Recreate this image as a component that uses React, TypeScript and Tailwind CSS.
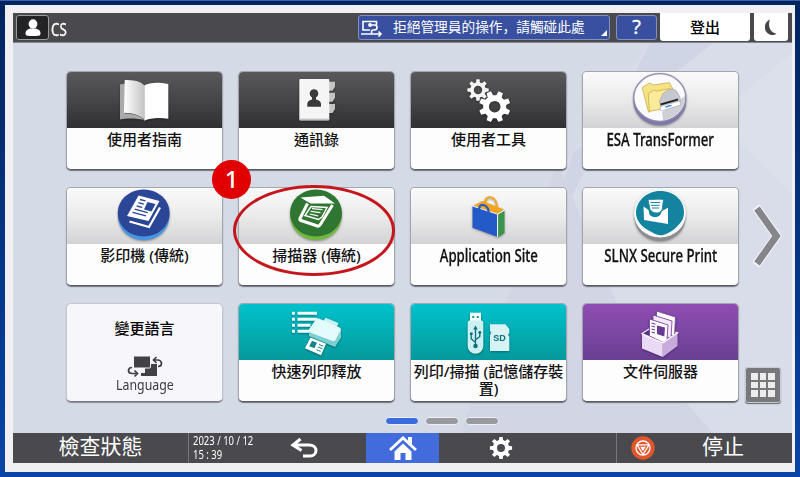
import React from 'react';

type Tone = 'dark' | 'light' | 'teal' | 'purple';

interface AppTile {
  id: string;
  tone: Tone;
  icon: React.ReactNode;
  label: React.ReactNode;
}

const toneClass: Record<Tone, string> = {
  dark: 'bg-linear-to-b from-[#59595b] via-[#464648] to-[#303032]',
  light: 'bg-linear-to-b from-[#fafafa] via-[#ebebec] to-[#d3d3d5]',
  teal: 'bg-linear-to-b from-[#00c2cc] to-[#06999c]',
  purple: 'bg-linear-to-b from-[#8f4db3] to-[#693f93]',
};

// closed outline of a cog wheel with eight teeth and a round hole
const gearPath = (cx: number, cy: number, outer: number, inner: number, hole: number, turn = 0) => {
  const points: string[] = [];
  for (let i = 0; i < 8; i++) {
    const base = ((i * 45 + turn - 90) * Math.PI) / 180;
    [[-0.25, inner], [-0.15, outer], [0.15, outer], [0.25, inner]].forEach(([a, r]) => {
      points.push(`${(cx + r * Math.cos(base + a)).toFixed(2)} ${(cy + r * Math.sin(base + a)).toFixed(2)}`);
    });
  }
  return `M${points.join('L')}ZM${cx - hole} ${cy}a${hole} ${hole} 0 1 0 ${hole * 2} 0a${hole} ${hole} 0 1 0 ${-hole * 2} 0Z`;
};

const TileIcon: React.FC<{ children: React.ReactNode }> = ({ children }) => (
  <svg className="-ml-px block h-[56px] w-[156px] drop-shadow-[0_1px_1px_rgba(0,0,0,0.35)]" viewBox="0 0 156 56" fill="none">
    {children}
  </svg>
);

const BookIcon = () => (
  <TileIcon>
    <defs>
      <linearGradient id="page" x1="0" x2="1">
        <stop offset="0" stopColor="#fff" />
        <stop offset="1" stopColor="#c4c4c4" />
      </linearGradient>
    </defs>
    <path d="M54 12.500l5-1v30c8 0 15 2 19.300 6.500C70 46 61 46 54 47.500Z" fill="#a9a9a9" />
    <path d="M58.700 8C67 8 75 9 78.300 13.500V47.500C74 43 66 41 58 40.700Z" fill="url(#page)" />
    <path d="M78.300 13.500C84 10 93 10 102.300 12V46.700C94 45.500 84 45.500 78.300 48.700Z" fill="#fff" />
  </TileIcon>
);

const AddressBookIcon = () => (
  <TileIcon>
    <path d="M91 9.700h6v5l-2.500 4H91ZM91 20.700h6v5l-2.500 4H91ZM91 32h6v5l-2.500 4H91Z" fill="#c3c3c3" />
    <rect x="61.300" y="7" width="30" height="41.500" rx="1" fill="#f5f5f5" />
    <path d="M61.300 47.300h30" stroke="#bcbcbc" strokeWidth="1.300" />
    <circle cx="76" cy="21.500" r="4.300" fill="#3a3a3c" />
    <path d="M69.300 34.700v-2.500c0-3 2.500-4.500 4.700-4.500v-3h4v3c2.500 0 5 1.500 5 4.500v2.500Z" fill="#3a3a3c" />
  </TileIcon>
);

const GearsIcon = () => (
  <TileIcon>
    <path d={gearPath(68, 18, 10.8, 7.8, 4.2)} fill="#f4f4f4" fillRule="evenodd" />
    <path d={gearPath(84.7, 34.7, 15.8, 11.6, 5.8, 22.5)} fill="#fff" fillRule="evenodd" />
  </TileIcon>
);

const TransformerIcon = () => (
  <TileIcon>
    <ellipse cx="77.800" cy="29" rx="26.500" ry="24.300" fill="#7f79a8" />
    <ellipse cx="77.800" cy="25.500" rx="26" ry="23.800" fill="#fbfbfd" stroke="#8d88b0" strokeWidth="1.300" />
    <path d="M80 40L103 24c1 12-9 22-22 24.500Z" fill="#cfcfd6" />
    <path d="M60.200 15.500l7.500-4.500 3.500 2 16.300-2.300 3 6-13 18-11 5.500Z" fill="#f5e384" stroke="#c9ad4c" strokeWidth=".8" />
    <path d="M66.200 21.500l5.500-3.500 3 1 13.800-2.500 3.500 4L78 37.500l-10.500 1.700Z" fill="#f9eb97" stroke="#c9ad4c" strokeWidth=".8" />
    <path d="M77.500 29l3.500-7.500q5-4.500 10-4.500l3 1.500 4 6.500v5.500l-19 6Z" fill="#c6c8cf" stroke="#9293a0" strokeWidth=".5" />
    <path d="M78.500 31.500l17.500-5v2l-17.500 5Z" fill="#222" />
    <path d="M78 34.500l20-5.500.5 4L79 39Z" fill="#fff" stroke="#9898a4" strokeWidth=".5" />
    <path d="M83.500 35l6-1.700" stroke="#3a86cf" strokeWidth="1.300" />
  </TileIcon>
);

const CopierIcon = () => (
  <TileIcon>
    <ellipse cx="77.700" cy="28.500" rx="25.700" ry="23.700" fill="#4694e2" />
    <ellipse cx="77.700" cy="25" rx="26" ry="23.600" fill="#2b4597" />
    <path d="M72.500 7.500L93.500 13 82.500 33 61 28Z" fill="#fff" />
    <path d="M63.500 33.500l19.500 5.500 11-19.500" stroke="#fff" strokeWidth="2.300" />
    <path d="M81.500 14l8 2-4 7.500-7.500-2Z" fill="#2b4597" />
    <path d="M74 11.500l5.500 1.400M72.400 14.700l5.400 1.400M70.700 18l5.400 1.400M68.700 21.200l13 3.500M66.500 24.300l13.500 3.600" stroke="#2b4597" strokeWidth="1.300" />
  </TileIcon>
);

const ScannerIcon = () => (
  <TileIcon>
    <ellipse cx="78" cy="28.500" rx="25.700" ry="23.700" fill="#72b63f" />
    <ellipse cx="78" cy="25" rx="26" ry="23.600" fill="#2e7631" />
    <path d="M62.500 9.500L86 7.800 97 15.500 72.500 15.500Z" fill="#fff" />
    <path d="M69.500 15.500L62 30.500q-.5 1.500 1 2l16.500 5.500q1.500.5 2.500-1L94.500 17" stroke="#fff" strokeWidth="3" strokeLinejoin="round" />
    <path d="M73 18.500l16 1-5 9.500-3.500 2.500-13.500-4Z" stroke="#fff" strokeWidth="1.500" />
    <path d="M74 20.700l10.500 1M72.800 23.300l9.700 1.300M71.600 26l8.500 1.800" stroke="#fff" strokeWidth="1.200" />
  </TileIcon>
);

const BagIcon = () => (
  <TileIcon>
    <path d="M63.500 17.500l9-4.500 21.500 8.500-7.300 4.200Z" fill="#f3a41d" />
    <path d="M88.200 26.500l6.300-4V45l-6.300 4.200Z" fill="#38954b" />
    <path d="M62.500 18l24.700 8v22.700L62.500 39.700Z" fill="#2459c8" />
    <path d="M62.500 18l25 8.200V49M87.500 26.200l7-4" stroke="#fff" strokeWidth=".9" />
    <path d="M75.500 16.500c-1-6 2-7.700 5-7.200 4.500.7 6.500 5 6.200 9.700" stroke="#f3a41d" strokeWidth="2" />
    <path d="M69 24.500c-.7-6 1.700-8.200 4.500-7.500 3.700.8 5.500 5 5.200 10.500" stroke="#2459c8" strokeWidth="2.200" />
  </TileIcon>
);

const SecurePrintIcon = () => (
  <TileIcon>
    <ellipse cx="78" cy="29.500" rx="25.500" ry="23.500" fill="#8b8b8f" />
    <ellipse cx="78" cy="25.500" rx="26" ry="24" fill="#f7f8f9" />
    <path d="M78 3C93 3 102 13 102 24c0 4-1 7.500-3 10-5 6.500-11 11-18 13-4 1-8-1-11.500-3C59 39 54 32 54 25 54 13 65 3 78 3Z" fill="#13839f" />
    <path d="M61.500 18.500l5 3.500 1 4.500c3 3.500 8 3.500 11 0l1.500-3.500 6-3.200V36l-24-4Z" fill="#fff" />
    <path d="M66 11.500c5 .5 9-1 15.500 0L80 22c-2 4-9 4-12-.5Z" fill="#fff" stroke="#13839f" strokeWidth=".8" />
    <path d="M68.500 14.500h9.500M69 17.300h8.500M70 20h7" stroke="#13839f" strokeWidth="1" />
  </TileIcon>
);

const QuickPrintIcon = () => (
  <TileIcon>
    <path d="M54 9.300h2.900M54 15.300h2.900M54 21.300h2.900M54 27.300h2.900M59.500 9.300h19.500M59.500 15.300h19.500M59.500 21.300h13M59.500 27.300h12" stroke="#effdfd" strokeWidth="3" />
    <path d="M71 25.500L78 15l25 10.500v8l-6 9.500-26-11Z" fill="#7bcfd0" />
    <path d="M87.500 13.700l13 5.300-4 9-14-6Z" fill="#c9f3f3" />
    <path d="M78.500 14.800q1.500-1 3 0l20 8.700q2 1 1 3l-5 9.500q-1 1.500-3 1L72 28.500q-2-1-1-3Z" fill="#e3fbfb" />
    <path d="M72.500 33.500l15.500 6.200-5 11.500-16-7Z" fill="#fff" />
    <path d="M74 36.700l5 2-2.700 5.500-5-2Z" fill="#14868a" />
    <path d="M81 40.500l4.300 1.700M80 43l4.300 1.700M78.500 45.700l4 1.700" stroke="#14868a" strokeWidth="1" />
  </TileIcon>
);

const StorageIcon = () => (
  <TileIcon>
    <path d="M60 8.700h11v9H60Z" fill="#f2fdfd" />
    <path d="M62.300 12h1.900v2h-1.900ZM66.800 12h1.900v2h-1.900Z" fill="#188e94" />
    <path d="M57.700 18.500q0-2 2-2h11.600q2 0 2 2V42a7.800 7.800 0 0 1-15.600 0Z" fill="#cdf0f0" />
    <path d="M65.500 42V24M65.500 38.500l-4.300-3.700V30M65.500 36l4.300-3.500v-4" stroke="#0a6d7d" strokeWidth="1.300" />
    <path d="M65.500 21.500l2.300 4h-4.600ZM60 28.500h2.600v2.600H60Z" fill="#0a6d7d" />
    <circle cx="69.800" cy="28.500" r="1.400" fill="#0a6d7d" />
    <circle cx="65.500" cy="42" r="2.200" fill="#0a6d7d" />
    <path d="M80 20.300h15.500l3.800 4.700v4l-.9 1v2l.9.500V47H80V31l.9-1v-2l-.9-1Z" fill="#d6f2f2" />
    <text x="89.600" y="37.200" textAnchor="middle" fill="#0a6d7d" className="font-['Liberation_Sans'] text-[9px] font-bold">
      SD
    </text>
  </TileIcon>
);

const DocumentServerIcon = () => (
  <TileIcon>
    <path d="M60 29.500l8-5 27.500 4-14.700 10Z" fill="#58307c" stroke="#f0e3fa" strokeWidth="1.200" />
    <path d="M74.500 7l19 6-1 19-18-4Z" fill="#fff" stroke="#7a44a0" strokeWidth=".9" />
    <path d="M71 11l19 6-1 17-18-4Z" fill="#f4e9fa" stroke="#7a44a0" strokeWidth=".9" />
    <path d="M67.500 15l18.500 6-1 15-4 2.500-13.500-6.500Z" fill="#fff" stroke="#7a44a0" strokeWidth=".9" />
    <path d="M75 21.500l8 2-.7 9-7.300-2.500Z" fill="#693a91" />
    <path d="M69.500 19l4 1.200M69.500 22l3.500 1M69.500 25l3.500 1M69.500 28l3.500 1" stroke="#693a91" strokeWidth="1.100" />
    <path d="M60 30.300l20.800 8.400v14.300L60 44.500Z" fill="#ead9f5" />
    <path d="M80.800 38.700l14.700-10V42L80.800 53Z" fill="#c9aade" />
    <path d="M60 30.300l20.800 8.400 14.700-10" stroke="#fff" strokeWidth="1.200" />
  </TileIcon>
);

// Latin labels use a narrow cut of the sans face
const Latin: React.FC<{ children: React.ReactNode }> = ({ children }) => (
  <span className="inline-block scale-x-[0.735] text-[18px] whitespace-nowrap [-webkit-text-stroke:0.3px_#111]">
    {children}
  </span>
);

const tiles: AppTile[] = [
  { id: 'guide', tone: 'dark', icon: <BookIcon />, label: '使用者指南' },
  { id: 'contacts', tone: 'dark', icon: <AddressBookIcon />, label: '通訊錄' },
  { id: 'tools', tone: 'dark', icon: <GearsIcon />, label: '使用者工具' },
  { id: 'esa', tone: 'light', icon: <TransformerIcon />, label: <Latin>ESA TransFormer</Latin> },
  { id: 'copier', tone: 'light', icon: <CopierIcon />, label: '影印機 (傳統)' },
  { id: 'scanner', tone: 'light', icon: <ScannerIcon />, label: '掃描器 (傳統)' },
  { id: 'site', tone: 'light', icon: <BagIcon />, label: <Latin>Application Site</Latin> },
  { id: 'slnx', tone: 'light', icon: <SecurePrintIcon />, label: <Latin>SLNX Secure Print</Latin> },
  { id: 'language', tone: 'light', icon: null, label: '變更語言' },
  { id: 'quick', tone: 'teal', icon: <QuickPrintIcon />, label: '快速列印釋放' },
  { id: 'storage', tone: 'teal', icon: <StorageIcon />, label: <>列印/掃描 (記憶儲存裝<br />置)</> },
  { id: 'server', tone: 'purple', icon: <DocumentServerIcon />, label: '文件伺服器' },
];

const tileFrame =
  'flex h-[99px] w-[157px] flex-col overflow-hidden rounded-[5px] border border-[#a3a6ae] border-b-[#5c5d62] bg-[#fdfdfe] shadow-[0_1px_1px_rgba(70,70,80,0.7)]';

const LanguageTile: React.FC<{ label: React.ReactNode }> = ({ label }) => (
  <div className="flex h-[99px] w-[157px] flex-col items-center rounded-[5px] border border-[#c3c6ce] border-b-[#77787d] bg-[#f7f7fb] pt-[15px] shadow-[0_1px_1px_rgba(70,70,80,0.5)]">
    <span className="text-[15px] leading-[18px] font-medium">{label}</span>
    <svg className="mt-[18px] h-[23px] w-9" viewBox="0 0 36 23" fill="none">
      <path d="M18 9h12v12H14v-3h4Z" fill="#414147" />
      <rect x="6.500" y="1" width="17" height="12" rx="1" fill="#414147" stroke="#f7f7fb" />
      <path d="M27 5h4q3.500.5 3.500 3.500T31 11.500M29.500 2L26.500 5l3 3M5 12.500q-3.500 0-3.500 3T5 18.500h5M7.500 15.500l3 3-3 3" stroke="#414147" strokeWidth="1.700" />
    </svg>
    <span className="-mt-[2px] scale-x-[0.85] text-[14.5px] leading-[16px] text-[#3a3a40]">Language</span>
  </div>
);

const Tile: React.FC<{ tile: AppTile }> = ({ tile }) => (
  <div className={tileFrame}>
    <div className={`h-[56px] shrink-0 ${toneClass[tile.tone]}`}>{tile.icon}</div>
    <div className="pt-[3px] text-center text-[15px] leading-[17px] font-medium whitespace-nowrap text-[#111]">
      {tile.label}
    </div>
  </div>
);

const TopBar = () => (
  <header className="flex h-[30px] shrink-0 items-center border-b border-[#85868f] bg-[#4a494e] pr-1 pl-[3px] text-white">
    <div className="flex h-[25px] w-[33px] items-center justify-center rounded-[3px] border border-[#9b9b9f] bg-[#232225]">
      <svg className="h-[18px] w-4" viewBox="0 0 16 18" fill="#fff">
        <ellipse cx="8" cy="5" rx="4.400" ry="4.700" />
        <path d="M.5 14.500C.5 11 3 10 5.700 9.500h4.600C13 10 15.500 11 15.500 14.500 15.500 17 13 17 8 17S.5 17 .5 14.500Z" />
      </svg>
    </div>
    <span className="mt-[2px] ml-[2px] origin-left scale-x-[0.74] text-[18px] leading-none [-webkit-text-stroke:0.3px_#fff]">CS</span>
    <div className="ml-auto flex h-full items-center">
      <div className="relative mr-[6px] flex h-[25px] w-[252px] items-center rounded-[3px] border border-[#8590bd] bg-[#3950a0] pl-[2px]">
        <svg className="h-[18px] w-[22px]" viewBox="0 0 22 18" fill="none" stroke="#fff" strokeWidth="1.600">
          <path d="M15.500 6V2.500H2v8.500h7M0 15h11M9 6h4.500q2.500 0 2.500 2.500T13.500 11H12q-1.500 0-1.500 2t1.500 2h8M17.500 12.500l2.500 2.500-2.500 2.500" />
          <circle cx="9" cy="6" r="1.900" fill="#fff" stroke="none" />
        </svg>
        <span className="-mt-[2px] ml-[10px] text-[13.7px] leading-none whitespace-nowrap">
          拒絕管理員的操作<span className="font-['Noto_Sans_CJK_SC',sans-serif]">，</span>請觸碰此處
        </span>
        <svg className="absolute right-[2px] bottom-[3px] h-[6px] w-[6px]" viewBox="0 0 6 6">
          <path d="M6 0v6H0Z" fill="#fff" />
        </svg>
      </div>
      <div className="mr-[3px] flex h-[25px] w-[41px] items-center justify-center rounded-[3px] border border-[#8590bd] bg-[#3950a0] pb-px font-['Open_Sans'] text-[20px] leading-none [-webkit-text-stroke:0.4px_#fff]">
        ?
      </div>
      <div className="mr-[4px] flex h-[28px] w-[90px] items-center justify-center self-start rounded-b-[3px] bg-white text-[15px] font-medium text-black">
        登出
      </div>
      <div className="flex h-[28px] w-[34px] items-center justify-center self-start rounded-b-[3px] bg-white">
        <svg className="h-[17px] w-3" viewBox="0 0 12 17">
          <path d="M5 .5C-1 3-2 11 3 14.500c3 2.200 6.500 2 8.500.3C5 13.500 2.500 6.500 5 .5Z" fill="#454449" />
        </svg>
      </div>
    </div>
  </header>
);

const Pager = () => (
  <div className="relative mt-[14px] flex gap-[6px] pl-[319px]">
    <span className="h-[8px] w-[34px] rounded-full border border-[#edf0f7] bg-[#3c6cdc]" />
    <span className="h-[8px] w-[34px] rounded-full border border-[#edf0f7] bg-[#9999a0]" />
    <span className="h-[8px] w-[34px] rounded-full border border-[#edf0f7] bg-[#9999a0]" />
  </div>
);

const BottomBar = () => (
  <footer className="flex h-[30px] shrink-0 items-center bg-[#4a494e] text-white">
    <div className="flex h-full w-[176px] items-center justify-center border-r border-[#77767b] pb-[3px] text-[21px] leading-none">
      檢查狀態
    </div>
    <div className="flex w-[78px] flex-col items-start pl-[4px] text-[12px] leading-[14px] whitespace-nowrap">
      <span className="origin-left scale-x-[0.79]">2023 / 10 / 12</span>
      <span className="origin-left scale-x-[0.79]">15 : 39</span>
    </div>
    <div className="flex w-[99px] justify-center pr-[25px]">
      <svg className="h-5 w-7" viewBox="0 0 28 20" fill="none">
        <path d="M5 7h14c4.500 0 7 2.500 7 5.500S23.500 18 20 18h-7" stroke="#fff" strokeWidth="3" />
        <path d="M10.500 1L3 7l8.500 5.500" stroke="#fff" strokeWidth="3.200" />
      </svg>
    </div>
    <div className="flex h-full w-[73px] items-center justify-center bg-[#426bdc]">
      <svg className="h-6 w-7" viewBox="0 0 28 24" fill="none">
        <path d="M1 14L14 2l13 12" stroke="#fff" strokeWidth="2.800" />
        <path d="M19 1h4v8L19 5.500Z" fill="#fff" />
        <path d="M14 7.500l8.500 8V24H16.500v-7h-5v7h-6v-8.500Z" fill="#fff" />
      </svg>
    </div>
    <div className="flex h-full w-[178px] items-center border-r border-[#77767b] pl-[50px]">
      <svg className="h-6 w-6" viewBox="0 0 24 24">
        <path d={gearPath(12, 12, 11.2, 8.2, 4)} fill="#fff" fillRule="evenodd" />
      </svg>
    </div>
    <div className="flex flex-1 items-center pl-[14px]">
      <svg className="h-6 w-6" viewBox="0 0 24 24" fill="none" stroke="#fff">
        <circle cx="12" cy="12" r="11.700" fill="#e2562c" stroke="none" />
        <circle cx="12" cy="12" r="7" strokeWidth="1.300" />
        <path d="M6 8.800h12l-6 9.700Z" strokeWidth="1.300" />
        <path d="M9.300 10.700h5.400L12 15.200Z" fill="#fff" stroke="none" />
      </svg>
      <span className="mb-[3px] ml-[47px] text-[21px] leading-none">停止</span>
    </div>
  </footer>
);

const App = () => (
  <div className="relative h-[477px] w-[800px] overflow-hidden border-t border-[#3661a8] bg-linear-to-b from-[#00245f] to-[#0a44a8] px-[5px] pt-[4px] pb-[5px] font-['Noto_Sans','Noto_Sans_CJK_TC',sans-serif]">
    <div className="h-[467px] bg-[#f0f0f3] pt-[8px] pr-[3px] pl-[8px]">
      <div className="flex h-[450px] flex-col">
        <TopBar />
        <main className="relative flex-1 bg-[#d5dbe6] pt-[28px] pl-[53px]">
          <svg className="absolute inset-0 h-full w-full" viewBox="0 0 779 390" preserveAspectRatio="none">
            <path d="M637 0H779V390H448L485 300 545 130Z" fill="#d9dde9" />
            <path d="M637 0H700L560 110 525 220Z" fill="#d0d5e5" />
            <path d="M448 390L478 300 545 120 620 300 700 390Z" fill="#d1d5e4" />
            <path d="M779 10V150L700 75Z" fill="#dce0ea" />
          </svg>
          <div className="relative flex">
            <div className="grid w-[673px] shrink-0 grid-cols-4 gap-x-[15px] gap-y-[16.5px]">
              {tiles.map((tile) =>
                tile.id === 'language' ? <LanguageTile key={tile.id} label={tile.label} /> : <Tile key={tile.id} tile={tile} />
              )}
            </div>
            <div className="flex w-[48px] flex-col items-center pt-[133px]">
              <svg className="ml-[9px] h-[64px] w-[34px]" viewBox="0 0 34 64" fill="none">
                <path d="M5 3L25.500 32 5 61" stroke="#f2f4f8" strokeWidth="9" />
                <path d="M6 4.500L25.500 32 6 59.500" stroke="#85858b" strokeWidth="6.800" />
              </svg>
              <div className="mt-[99px] grid h-[36px] w-[36px] grid-cols-3 gap-[2px] rounded-[3px] border border-[#c8cad1] bg-[#77777c] p-[5px] shadow-[0_1px_1px_#66666a]">
                {Array.from({ length: 9 }, (_, i) => (
                  <span key={i} className="bg-[#ececef]" />
                ))}
              </div>
            </div>
          </div>
          <Pager />
        </main>
        <BottomBar />
      </div>
    </div>

    {/* step marker */}
    <div className="absolute top-[184px] left-[233px] h-[91px] w-[162px] rounded-[50%] border-[3px] border-[#c4161c]" />
    <div className="absolute top-[159px] left-[212px] flex h-[39px] w-[39px] items-center justify-center rounded-full bg-[#e00000] pb-px text-[24px] leading-none font-medium text-white">
      1
    </div>
  </div>
);

export default App;
